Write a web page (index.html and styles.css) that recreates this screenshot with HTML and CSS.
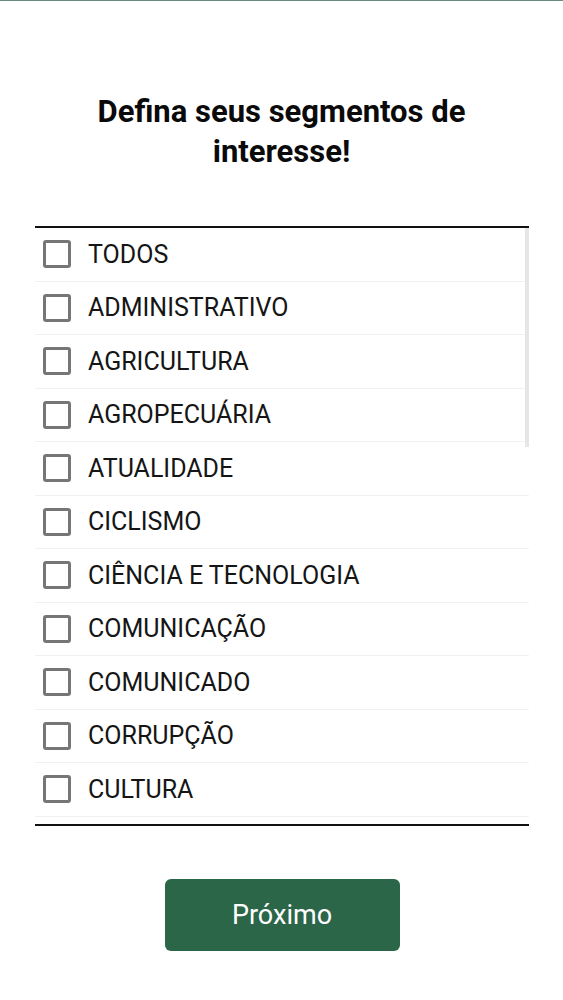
FILE: index.html
```html
<!DOCTYPE html>
<html lang="pt-BR">
<head>
<meta charset="utf-8">
<title>Segmentos</title>
<link rel="stylesheet" href="styles.css">
</head>
<body>
<div class="topline"></div>
<main class="page">
  <h1 class="title">Defina seus segmentos de<br>interesse!</h1>
  <div class="list">
    <div class="scrollbar"></div>
    <label class="row"><span class="box"></span><span class="label">TODOS</span></label>
    <label class="row"><span class="box"></span><span class="label">ADMINISTRATIVO</span></label>
    <label class="row"><span class="box"></span><span class="label">AGRICULTURA</span></label>
    <label class="row"><span class="box"></span><span class="label">AGROPECUÁRIA</span></label>
    <label class="row"><span class="box"></span><span class="label">ATUALIDADE</span></label>
    <label class="row"><span class="box"></span><span class="label">CICLISMO</span></label>
    <label class="row"><span class="box"></span><span class="label">CIÊNCIA E TECNOLOGIA</span></label>
    <label class="row"><span class="box"></span><span class="label">COMUNICAÇÃO</span></label>
    <label class="row"><span class="box"></span><span class="label">COMUNICADO</span></label>
    <label class="row"><span class="box"></span><span class="label">CORRUPÇÃO</span></label>
    <label class="row"><span class="box"></span><span class="label">CULTURA</span></label>
  </div>
  <button class="next" type="button">Próximo</button>
</main>
</body>
</html>
```

FILE: styles.css
```css
html, body {
  margin: 0;
  padding: 0;
  background: #ffffff;
}
body {
  font-family: Roboto, "Liberation Sans", Arial, sans-serif;
  color: #111111;
}
.topline {
  height: 1px;
  background: #6b8a7f;
}
.page {
  display: flex;
  flex-direction: column;
  align-items: center;
  padding-top: 91px;
}
.title {
  margin: 0;
  font-size: 31px;
  line-height: 40px;
  font-weight: 700;
  text-align: center;
  color: #0a0a0a;
}
.list {
  position: relative;
  margin-top: 54px;
  width: 494px;
  height: 596px;
  overflow: hidden;
  border-top: 2px solid #111111;
  border-bottom: 2px solid #111111;
  box-sizing: content-box;
  margin-left: 1px;
}
.scrollbar {
  position: absolute;
  top: 0;
  right: -1px;
  width: 5px;
  height: 219px;
  background: #e6e6e6;
}
.row {
  display: flex;
  align-items: center;
  height: 53.5px;
  box-sizing: border-box;
  padding-left: 8px;
  border-bottom: 1px solid #f1f1f1;
}
.box {
  width: 28px;
  height: 28px;
  box-sizing: border-box;
  border: 3px solid #767676;
  border-radius: 3px;
  flex: none;
}
.label {
  margin-left: 17px;
  font-size: 25px;
  color: #151515;
}
.next {
  margin-top: 53px;
  width: 235px;
  height: 72px;
  border: none;
  border-radius: 6px;
  background: #2b6649;
  color: #ffffff;
  font-family: Roboto, "Liberation Sans", Arial, sans-serif;
  font-size: 27px;
  margin-left: 1px;
}
```
